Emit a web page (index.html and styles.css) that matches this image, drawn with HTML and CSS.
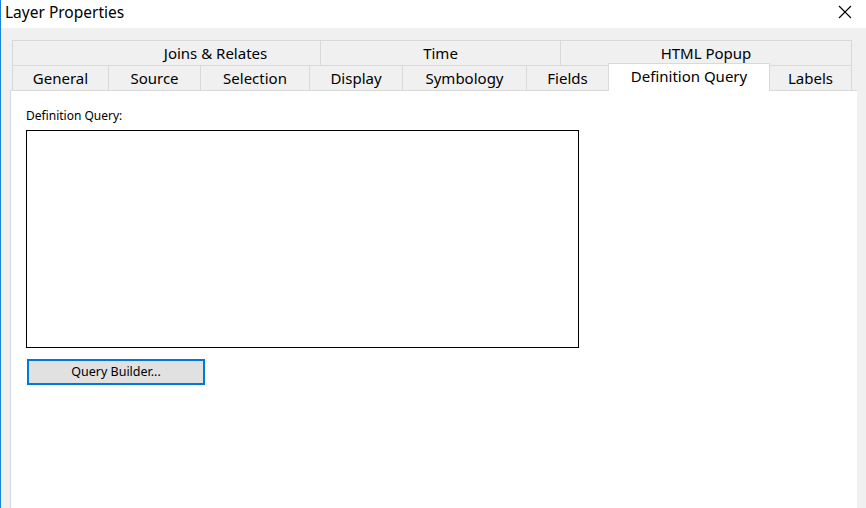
FILE: index.html
```html
<!DOCTYPE html>
<html>
<head>
<meta charset="utf-8">
<link rel="stylesheet" href="styles.css">
</head>
<body>
<div class="window">
  <div class="titlebar">
    <span class="title">Layer Properties</span>
    <svg class="close" width="14" height="14" viewBox="0 0 14 14"><path d="M1 1 L13 13 M13 1 L1 13" stroke="#000" stroke-width="1.1" fill="none"/></svg>
  </div>
  <div class="client">
    <div class="tabs">
      <div class="row row1">
        <div class="tab t-joins"><span>Joins &amp; Relates</span></div>
        <div class="tab t-time"><span>Time</span></div>
        <div class="tab t-html last"><span>HTML Popup</span></div>
      </div>
      <div class="row row2">
        <div class="tab t-general"><span>General</span></div>
        <div class="tab t-source"><span>Source</span></div>
        <div class="tab t-selection"><span>Selection</span></div>
        <div class="tab t-display"><span>Display</span></div>
        <div class="tab t-symbology"><span>Symbology</span></div>
        <div class="tab t-fields"><span>Fields</span></div>
        <div class="tab t-defq active"><span>Definition Query</span></div>
        <div class="tab t-labels last"><span>Labels</span></div>
      </div>
    </div>
    <div class="panel">
      <div class="label">Definition Query:</div>
      <div class="querybox"></div>
      <button class="btn">Query Builder...</button>
    </div>
  </div>
</div>
</body>
</html>
```
FILE: styles.css
```css
html, body {
  margin: 0;
  padding: 0;
}
body {
  width: 866px;
  height: 508px;
  overflow: hidden;
  background: #f0f0f0;
  font-family: "Noto Sans", "Open Sans", sans-serif;
  color: #000;
}
.window {
  width: 866px;
  height: 508px;
  box-sizing: border-box;
  border-left: 1px solid #1883d7;
  display: flex;
  flex-direction: column;
}
.titlebar {
  height: 28px;
  background: #fff;
  display: flex;
  align-items: center;
  justify-content: space-between;
  padding: 0 14px 0 4px;
  flex-shrink: 0;
}
.title {
  font-size: 15.5px;
  line-height: 20px;
  margin-top: -4px;
}
.close {
  margin-top: -4px;
}
.client {
  flex: 1;
  background: #f0f0f0;
  padding: 12px 8px 0 9px;
  display: flex;
  flex-direction: column;
}
.tabs {
  padding-left: 2px;
  width: 840px;
}
.row {
  display: flex;
  height: 25px;
  align-items: flex-end;
}
.tab {
  box-sizing: border-box;
  height: 25px;
  border-top: 1px solid #d9d9d9;
  border-left: 1px solid #d9d9d9;
  background: #f0f0f0;
  display: flex;
  align-items: center;
  justify-content: center;
  font-size: 15px;
  line-height: 20px;
  white-space: nowrap;
}
.tab span {
  margin-top: -1px;
}
.tab.last {
  border-right: 1px solid #d9d9d9;
}
.t-joins { width: 308px; padding-left: 98px; }
.t-time { width: 240px; }
.t-html { width: 292px; }
.t-general { width: 96px; }
.t-source { width: 92px; }
.t-selection { width: 109px; }
.t-display { width: 93px; }
.t-symbology { width: 124px; }
.t-fields { width: 82px; }
.t-defq { width: 162px; }
.t-labels { width: 82px; }
.tab.active {
  height: 28px;
  margin-bottom: -1px;
  background: #fff;
  border-right: 1px solid #d9d9d9;
  position: relative;
  z-index: 2;
}
.tab.active span {
  margin-top: -4px;
}
.tab.active + .tab {
  border-left: none;
}
.panel {
  flex: 1;
  width: 847px;
  background: #fff;
  border-top: 1px solid #d9d9d9;
  border-left: 1px solid #d9d9d9;
  padding: 17px 0 0 15px;
  box-sizing: border-box;
  display: flex;
  flex-direction: column;
  align-items: flex-start;
}
.label {
  font-size: 12px;
  line-height: 16px;
}
.querybox {
  margin-top: 6px;
  width: 553px;
  height: 218px;
  box-sizing: border-box;
  border: 1px solid #000;
  background: #fff;
}
.btn {
  margin: 11px 0 0 1px;
  width: 178px;
  height: 26px;
  box-sizing: border-box;
  border: 2px solid #0078d7;
  background: #e1e1e1;
  font-family: "Noto Sans", "Open Sans", sans-serif;
  font-size: 12.5px;
  line-height: 16px;
  padding: 0;
  color: #000;
}
```
